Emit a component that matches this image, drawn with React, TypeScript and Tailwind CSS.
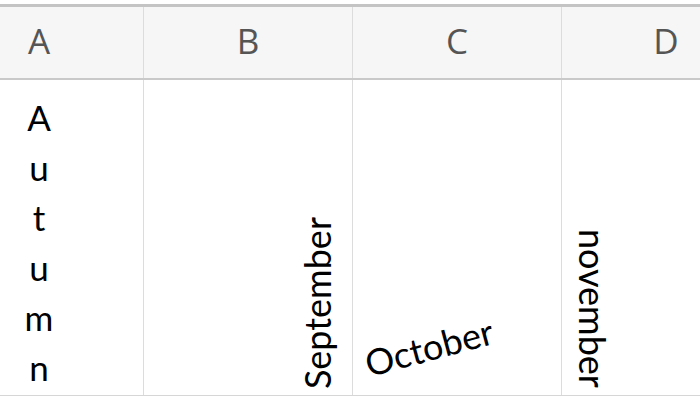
const cols = ["A", "B", "C", "D"]

export default function App() {
  return (
    <div className="w-[700px] h-[400px] overflow-hidden bg-white" style={{ fontFamily: "Lato, 'Open Sans', sans-serif" }}>
      <div className="h-[4px] bg-white" />
      <div className="h-[3px] bg-[#c4c4c4]" />
      {/* column headers */}
      <div className="flex ml-[-65px] h-[73px] bg-[#f6f6f6] border-b-2 border-[#c9c9c9]">
        {cols.map((c) => (
          <div
            key={c}
            className="w-[209px] shrink-0 border-r border-[#dcdcdc] flex items-center justify-center text-[35px] text-[#555555] pb-[2px]"
            style={{ fontFamily: "'Open Sans', 'Liberation Sans', sans-serif" }}
          >
            {c}
          </div>
        ))}
      </div>
      {/* row 1 */}
      <div className="flex ml-[-65px] h-[316px] border-b border-[#d6d6d6] text-[36px] text-black">
        <div className="w-[209px] shrink-0 border-r border-[#dcdcdc] flex flex-col items-center justify-end pb-[3px] text-[35px]">
          {"Autumn".split("").map((ch, i) => (
            <span key={i} className="leading-[50px]">{ch}</span>
          ))}
        </div>
        <div className="w-[209px] shrink-0 border-r border-[#dcdcdc] flex items-end justify-end pr-[14px] pb-[6px]">
          <span className="[writing-mode:vertical-rl] rotate-180 leading-[42px]">September</span>
        </div>
        <div className="w-[209px] shrink-0 border-r border-[#dcdcdc] flex items-end pl-[18px] pb-[11px]">
          <span className="inline-block leading-[42px] origin-bottom-left -rotate-[15deg] whitespace-nowrap">October</span>
        </div>
        <div className="w-[209px] shrink-0 border-r border-[#dcdcdc] flex items-end pl-[10px] pb-[7px]">
          <span className="[writing-mode:vertical-rl] leading-[42px]">november</span>
        </div>
      </div>
    </div>
  )
}
